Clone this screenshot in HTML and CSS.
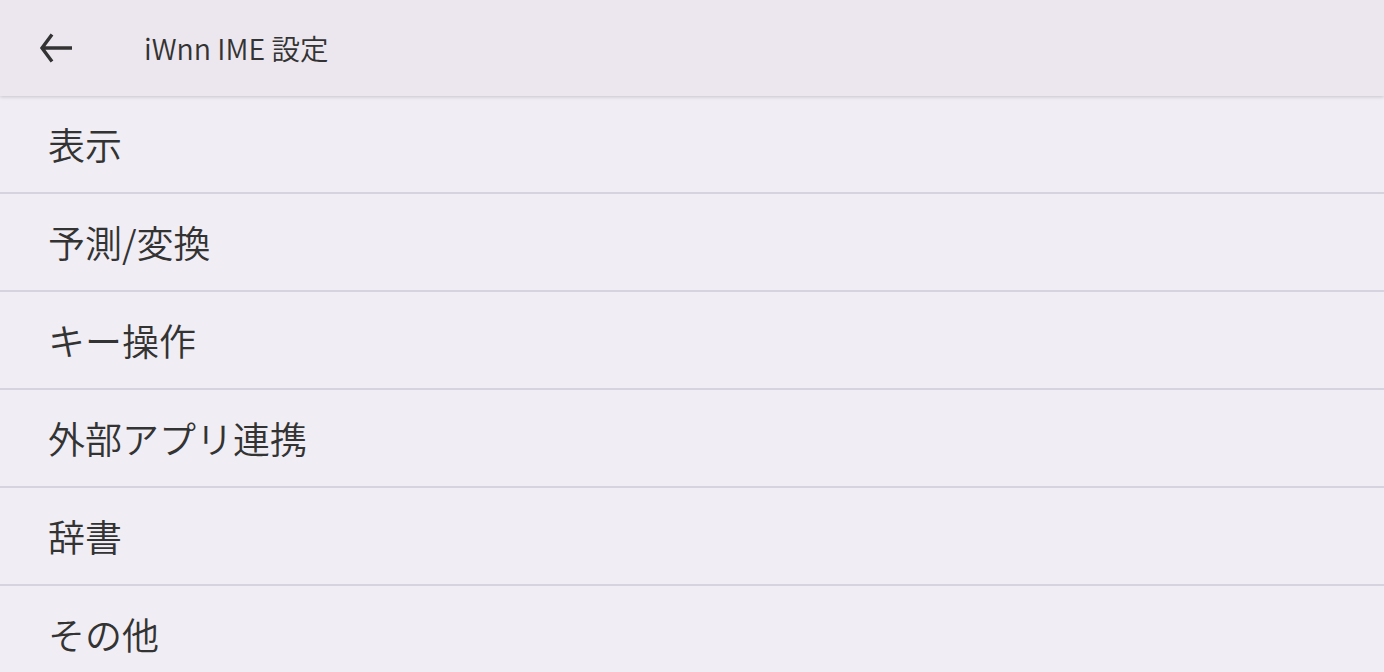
FILE: index.html
```html
<!DOCTYPE html>
<html lang="ja">
<head>
<meta charset="utf-8">
<link rel="stylesheet" href="styles.css">
</head>
<body>
<header class="appbar">
  <span class="back">
    <svg width="34" height="34" viewBox="0 0 34 34"><path d="M33 17H4M13 3.5L3 17L13 30.5" fill="none" stroke="#333" stroke-width="3.4"/></svg>
  </span>
  <span class="title">iWnn IME 設定</span>
</header>
<ul class="list">
  <li class="item">表示</li>
  <li class="item">予測/変換</li>
  <li class="item">キー操作</li>
  <li class="item">外部アプリ連携</li>
  <li class="item">辞書</li>
  <li class="item">その他</li>
</ul>
</body>
</html>
```
FILE: styles.css
```css
html, body {
  margin: 0;
  padding: 0;
  background: #f0edf4;
  font-family: "Noto Sans CJK JP", sans-serif;
  color: #333333;
  overflow: hidden;
}
.appbar {
  height: 96px;
  background: #ece6ee;
  display: flex;
  align-items: center;
  box-shadow: 0 1px 3px rgba(0,0,0,0.12), 0 2px 4px rgba(0,0,0,0.04);
  position: relative;
  z-index: 1;
}
.back {
  width: 34px;
  height: 34px;
  margin-left: 39px;
  display: flex;
}
.title {
  margin-left: 71px;
  font-size: 28.5px;
  font-weight: 350;
  margin-top: -2px;
}
.list {
  list-style: none;
  margin: 0;
  padding: 0;
}
.item {
  height: 96px;
  display: flex;
  align-items: center;
  padding-left: 48px;
  font-size: 37px;
  font-weight: 350;
  border-bottom: 2px solid #d6d3de;
}
```
